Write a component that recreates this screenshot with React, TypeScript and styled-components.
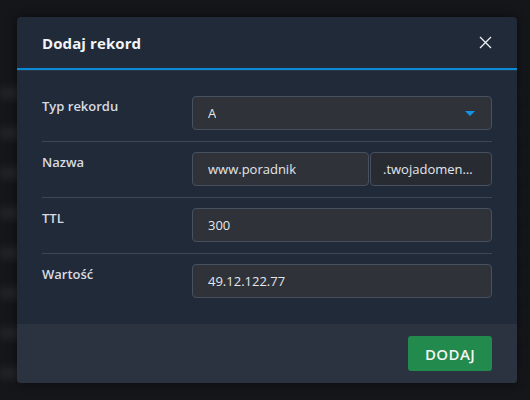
import React from 'react';
import styled, {createGlobalStyle} from 'styled-components';

const Global = createGlobalStyle`
	html, body {
		margin: 0;
		padding: 0;
		background: #151619;
		font-family: "Open Sans", "Liberation Sans", sans-serif;
	}
`;

const Page = styled.div`
	position: relative;
	width: 530px;
	height: 400px;
	overflow: hidden;
	background: #151619;
`;

const Backdrop = styled.div`
	display: flex;
	flex-direction: column;
	gap: 30px;
	padding: 88px 0 0 0;
	filter: blur(4px);
`;

const GhostRow = styled.div`
	height: 10px;
	width: 520px;
	background: linear-gradient(90deg, #2a2b2e 0, #222326 40%, #1b1c1f 100%);
	opacity: 0.8;
`;

const Modal = styled.div`
	position: absolute;
	left: 17px;
	top: 17px;
	width: 500px;
	background: #212a38;
	border-radius: 4px;
	overflow: hidden;
	display: flex;
	flex-direction: column;
	box-shadow: 0 0 10px rgba(0, 0, 0, 0.5);
`;

const Header = styled.div`
	height: 51px;
	display: flex;
	align-items: center;
	justify-content: space-between;
	padding: 0 25px;
	border-bottom: 2px solid #0b8ad8;
	box-shadow: 0 1px 0 #2c3645;
`;

const Title = styled.h2`
	margin: 0;
	font-size: 15px;
	font-weight: 700;
	color: #f2f4f7;
	letter-spacing: 0.1px;
`;

const CloseButton = styled.button`
	border: 0;
	background: none;
	padding: 0;
	width: 14px;
	height: 14px;
	display: flex;
	align-items: center;
	justify-content: center;
	cursor: pointer;
`;

const Body = styled.div`
	padding: 26px 25px 26px 25px;
	display: flex;
	flex-direction: column;
`;

const Row = styled.div<{$last?: boolean}>`
	display: grid;
	grid-template-columns: 150px 1fr;
	padding: ${p => (p.$last ? '0' : '0 0 11px 0')};
	margin-bottom: ${p => (p.$last ? '0' : '10px')};
	border-bottom: ${p => (p.$last ? 'none' : '1px solid #3e4756')};
`;

const Label = styled.label`
	font-size: 13px;
	font-weight: 600;
	color: #d7dbe1;
	padding-top: 1px;
	line-height: 18px;
`;

const Fields = styled.div`
	display: flex;
	gap: 1px;
`;

const Field = styled.div<{$width?: number; $dim?: boolean; $center?: boolean}>`
	box-sizing: border-box;
	height: 34px;
	flex: ${p => (p.$width ? `0 0 ${p.$width}px` : '1 1 auto')};
	min-width: 0;
	display: flex;
	align-items: center;
	justify-content: space-between;
	padding: ${p => (p.$center ? '0 12px' : '0 15px')};
	background: ${p => (p.$dim ? '#282b32' : '#2f3239')};
	border: 1px solid #475060;
	border-radius: 4px;
	font-size: 13px;
	color: #e4e6ea;
`;

const FieldText = styled.span`
	white-space: nowrap;
	overflow: hidden;
	text-overflow: ellipsis;
`;

const Caret = styled.span`
	width: 0;
	height: 0;
	border-left: 5px solid transparent;
	border-right: 5px solid transparent;
	border-top: 5px solid #1493e6;
	margin-right: 1px;
`;

const Footer = styled.div`
	background: #2b3340;
	height: 59px;
	box-sizing: border-box;
	padding: 12px 25px 0 25px;
	display: flex;
	justify-content: flex-end;
	align-items: flex-start;
`;

const SubmitButton = styled.button`
	width: 84px;
	height: 35px;
	border: 0;
	border-radius: 3px;
	background: #218a4c;
	color: #f3f6f4;
	font-family: "Open Sans", "Liberation Sans", sans-serif;
	font-size: 15px;
	font-weight: 600;
	letter-spacing: 0.4px;
	cursor: pointer;
`;

const CloseIcon = () => (
	<svg width="13" height="13" viewBox="0 0 13 13">
		<path d="M1 1 L12 12 M12 1 L1 12" stroke="#eef0f3" strokeWidth="1.3" fill="none" />
	</svg>
);

export default function App() {
	return (
		<>
			<Global />
			<Page>
				<Backdrop>
					{Array.from({length: 8}).map((_, i) => (
						<GhostRow key={i} />
					))}
				</Backdrop>
				<Modal>
					<Header>
						<Title>Dodaj rekord</Title>
						<CloseButton aria-label="Zamknij">
							<CloseIcon />
						</CloseButton>
					</Header>
					<Body>
						<Row>
							<Label>Typ rekordu</Label>
							<Fields>
								<Field>
									<FieldText>A</FieldText>
									<Caret />
								</Field>
							</Fields>
						</Row>
						<Row>
							<Label>Nazwa</Label>
							<Fields>
								<Field>
									<FieldText>www.poradnik</FieldText>
								</Field>
								<Field $width={122} $dim $center>
									<FieldText>.twojadomena.pl</FieldText>
								</Field>
							</Fields>
						</Row>
						<Row>
							<Label>TTL</Label>
							<Fields>
								<Field>
									<FieldText>300</FieldText>
								</Field>
							</Fields>
						</Row>
						<Row $last>
							<Label>Wartość</Label>
							<Fields>
								<Field>
									<FieldText>49.12.122.77</FieldText>
								</Field>
							</Fields>
						</Row>
					</Body>
					<Footer>
						<SubmitButton>DODAJ</SubmitButton>
					</Footer>
				</Modal>
			</Page>
		</>
	);
}
